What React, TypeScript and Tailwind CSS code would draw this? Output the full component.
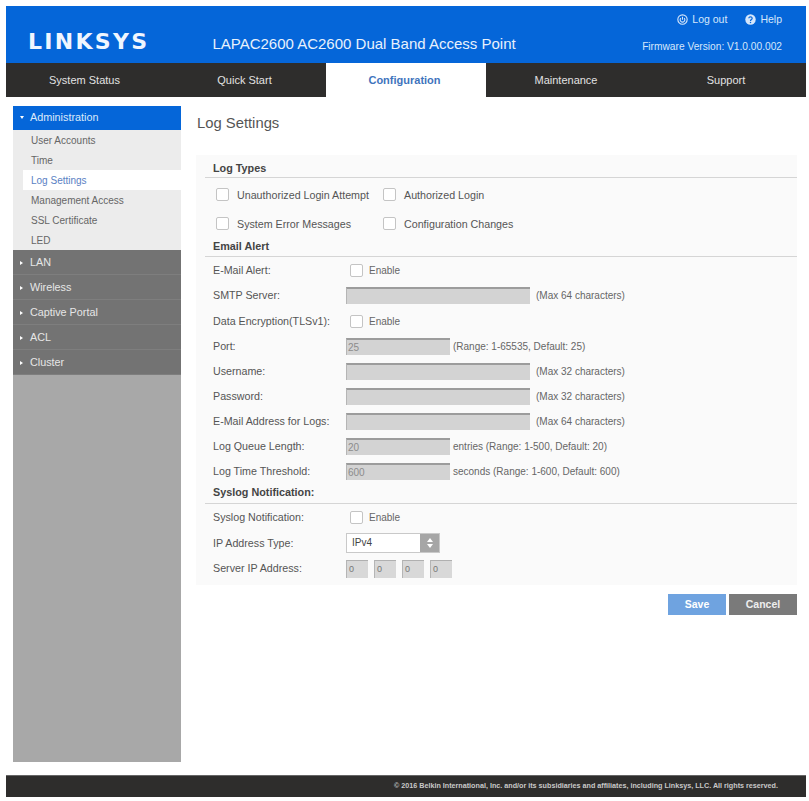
import React from 'react';
import { clsx } from 'clsx';

const font = "font-['Liberation_Sans',Arial,sans-serif]";

const tabs = ['System Status', 'Quick Start', 'Configuration', 'Maintenance', 'Support'];
const subItems = ['User Accounts', 'Time', 'Log Settings', 'Management Access', 'SSL Certificate', 'LED'];
const menuItems = ['LAN', 'Wireless', 'Captive Portal', 'ACL', 'Cluster'];

const Checkbox = () => (
  <span className="block h-[13px] w-[13px] shrink-0 rounded-[2px] border border-[#c4c4c4] bg-white" />
);

const Field = ({ wide, value, hint }: { wide?: boolean; value?: string; hint: string }) => (
  <div className="flex items-center">
    <div
      className={clsx(
        'h-[17px] border-t-2 border-l border-t-[#9c9c9c] border-l-[#b5b5b5] bg-[#d3d3d3] pl-px text-[10px] leading-[15px] text-[#8c8c8c]',
        wide ? 'w-[184px]' : 'w-[104px]'
      )}
    >
      {value}
    </div>
    <span className={clsx('text-[10px] whitespace-nowrap text-[#666]', wide ? 'ml-[6px]' : 'ml-[3px]')}>{hint}</span>
  </div>
);

const Enable = () => (
  <div className="flex items-center pl-[4px]">
    <Checkbox />
    <span className="ml-[6px] text-[10px] text-[#666]">Enable</span>
  </div>
);

const Row = ({ label, h = 25, children }: { label: string; h?: number; children: React.ReactNode }) => (
  <div className={clsx('flex items-center', h === 26 ? 'h-[26px]' : 'h-[25px]')}>
    <span className="w-[133px] shrink-0 text-[10.7px] whitespace-nowrap text-[#555]">{label}</span>
    {children}
  </div>
);

const SectionHead = ({ title, className }: { title: string; className?: string }) => (
  <div className={clsx('-ml-[8px] border-b border-[#d5d5d5] pl-[8px] text-[10.8px] leading-[14px] font-bold text-[#444]', className)}>
    {title}
  </div>
);

const LogType = ({ label, className }: { label: string; className?: string }) => (
  <div className={clsx('flex items-center', className)}>
    <Checkbox />
    <span className="ml-[8px] text-[10.7px] whitespace-nowrap text-[#555]">{label}</span>
  </div>
);

export default function App() {
  return (
    <div className={clsx('flex h-[801px] w-[809px] flex-col bg-white pt-[6px] pr-[3px] pl-[6px]', font)}>
      <header className="flex h-[57px] justify-between bg-[#0566d9] text-white">
        <div className="flex items-end pb-[10px]">
          <span className="ml-[22px] font-['DejaVu_Sans',sans-serif] text-[22px] leading-[22px] font-bold tracking-[2.3px] text-[#f0f6ff]">
            LINKSYS
          </span>
          <span className="ml-[63px] text-[15px] leading-[18px] whitespace-nowrap text-[#e8f1fc]">
            LAPAC2600 AC2600 Dual Band Access Point
          </span>
        </div>
        <div className="flex flex-col items-end pt-[7px] pr-[24px] text-[#d5e6fb]">
          <div className="flex items-center text-[10.5px] leading-[12px]">
            <svg viewBox="0 0 16 16" className="h-[11px] w-[11px]" fill="none" stroke="currentColor" strokeWidth="1.6">
              <circle cx="8" cy="8" r="6.8" />
              <path d="M5.6 6a3.4 3.4 0 1 0 4.8 0M8 4v4.4" />
            </svg>
            <span className="ml-[4px]">Log out</span>
            <svg viewBox="0 0 16 16" className="ml-[18px] h-[11px] w-[11px]">
              <circle cx="8" cy="8" r="7.6" fill="currentColor" />
              <path d="M5.6 6.2a2.4 2.2 0 1 1 3.7 1.9c-.8.5-1.3.9-1.3 1.9" fill="none" stroke="#0566d9" strokeWidth="1.8" />
              <circle cx="8" cy="12.3" r="1.1" fill="#0566d9" />
            </svg>
            <span className="ml-[4px]">Help</span>
          </div>
          <span className="mt-[16px] text-[10.2px] leading-[12px]">Firmware Version: V1.0.00.002</span>
        </div>
      </header>

      <nav className="grid h-[34px] grid-cols-5 bg-[#2e2d2c]">
        {tabs.map((tab, i) => (
          <div
            key={tab}
            className={clsx(
              'flex items-center justify-center text-[11px]',
              i < 3 && 'pr-[3px]',
              tab === 'Configuration' ? 'bg-white font-bold text-[#3f74bd]' : 'text-[#e2e2e2]'
            )}
          >
            {tab}
          </div>
        ))}
      </nav>

      <div className="flex flex-1 pt-[9px]">
        <aside className="ml-[7px] flex h-[656px] w-[168px] flex-col bg-[#a8a8a8]">
          <div className="flex h-[24px] items-center bg-[#0566d9] pb-px pl-[7px] text-[10.8px] text-[#dce9fa]">
            <span className="mr-[6px] h-0 w-0 border-x-[2.5px] border-t-[3.5px] border-x-transparent border-t-white" />
            Administration
          </div>
          <div className="bg-[#ececec]">
            {subItems.map((item) => (
              <div
                key={item}
                className={clsx(
                  'flex h-[20px] items-center text-[10px]',
                  item === 'Log Settings' ? 'ml-[10px] bg-white pl-[8px] text-[#5a7fc4]' : 'pl-[18px] text-[#666]'
                )}
              >
                {item}
              </div>
            ))}
          </div>
          {menuItems.map((item) => (
            <div
              key={item}
              className="flex h-[25px] items-center border-b border-[#7e7e7e] bg-[#737373] pt-px pl-[7px] text-[10.8px] text-[#e6e6e6]"
            >
              <span className="mr-[7px] h-0 w-0 border-y-[2.5px] border-l-[3.5px] border-y-transparent border-l-white" />
              {item}
            </div>
          ))}
        </aside>

        <main className="ml-[15px] flex w-[601px] flex-col">
          <h1 className="ml-[1px] h-[49px] pt-[8px] text-[14.8px] leading-[18px] text-[#555]">Log Settings</h1>
          <section className="h-[430px] bg-[#fafafa] pt-[6px] pl-[17px]">
            <SectionHead title="Log Types" className="h-[17px]" />
            <div className="flex h-[34px] items-center pl-[3px]">
              <LogType label="Unauthorized Login Attempt" className="w-[167px]" />
              <LogType label="Authorized Login" />
            </div>
            <div className="flex h-[24px] items-center pl-[3px]">
              <LogType label="System Error Messages" className="w-[167px]" />
              <LogType label="Configuration Changes" />
            </div>
            <SectionHead title="Email Alert" className="mt-[3px] h-[18px]" />
            <Row label="E-Mail Alert:" h={26}>
              <Enable />
            </Row>
            <Row label="SMTP Server:">
              <Field wide hint="(Max 64 characters)" />
            </Row>
            <Row label="Data Encryption(TLSv1):" h={26}>
              <Enable />
            </Row>
            <Row label="Port:">
              <Field value="25" hint="(Range: 1-65535, Default: 25)" />
            </Row>
            <Row label="Username:">
              <Field wide hint="(Max 32 characters)" />
            </Row>
            <Row label="Password:">
              <Field wide hint="(Max 32 characters)" />
            </Row>
            <Row label="E-Mail Address for Logs:">
              <Field wide hint="(Max 64 characters)" />
            </Row>
            <Row label="Log Queue Length:">
              <Field value="20" hint="entries (Range: 1-500, Default: 20)" />
            </Row>
            <Row label="Log Time Threshold:">
              <Field value="600" hint="seconds (Range: 1-600, Default: 600)" />
            </Row>
            <SectionHead title="Syslog Notification:" className="mt-[1px] h-[19px]" />
            <Row label="Syslog Notification:" h={26}>
              <Enable />
            </Row>
            <Row label="IP Address Type:" h={26}>
              <div className="flex h-[20px] w-[94px] border border-[#c9c9c9] bg-white">
                <span className="flex-1 pl-[5px] text-[10px] leading-[18px] text-[#444]">IPv4</span>
                <span className="flex w-[19px] flex-col items-center justify-center gap-[2px] bg-[#a6a6a6]">
                  <span className="h-0 w-0 border-x-[3px] border-b-[4px] border-x-transparent border-b-white" />
                  <span className="h-0 w-0 border-x-[3px] border-t-[4px] border-x-transparent border-t-white" />
                </span>
              </div>
            </Row>
            <Row label="Server IP Address:">
              <div className="flex gap-[6px]">
                {['a', 'b', 'c', 'd'].map((k) => (
                  <div
                    key={k}
                    className="h-[18px] w-[22px] border-t border-l border-t-[#b0b0b0] border-l-[#b5b5b5] bg-[#d8d8d8] pl-[2px] text-[9px] leading-[17px] text-[#777]"
                  >
                    0
                  </div>
                ))}
              </div>
            </Row>
          </section>
          <div className="mt-[9px] flex justify-end gap-[3px]">
            <button className="h-[21px] w-[58px] bg-[#6fa3e0] text-[10.5px] font-bold text-white">Save</button>
            <button className="h-[21px] w-[68px] bg-[#7a7a7a] text-[10.5px] font-bold text-[#eee]">Cancel</button>
          </div>
        </main>
      </div>

      <footer className="mb-[4px] flex h-[22px] items-center justify-end border-t border-[#666] bg-[#2e2d2c] pr-[28px] text-[7.2px] font-bold whitespace-nowrap text-[#c9c9c9]">
        © 2016 Belkin International, Inc. and/or its subsidiaries and affiliates, including Linksys, LLC. All rights reserved.
      </footer>
    </div>
  );
}
